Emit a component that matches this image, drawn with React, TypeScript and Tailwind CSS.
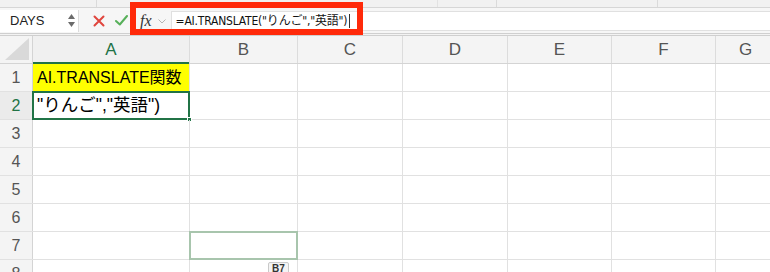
import React from "react";

const cols = [
  { l: "A", w: "w-[157px]" },
  { l: "B", w: "w-[108px]" },
  { l: "C", w: "w-[105px]" },
  { l: "D", w: "w-[105px]" },
  { l: "E", w: "w-[104px]" },
  { l: "F", w: "w-[104px]" },
  { l: "G", w: "w-[60px]" },
];

const rows = [1, 2, 3, 4, 5, 6, 7, 8];

function Cell({ r, c }: { r: number; c: number }) {
  const base = `${cols[c].w} shrink-0 h-full border-r border-[#e1e1e1] relative`;
  if (r === 1 && c === 0) {
    return (
      <div className={`${base} bg-[#ffff00] flex items-center pl-[4px] text-[16px] text-black whitespace-nowrap`}>
        AI.TRANSLATE関数
      </div>
    );
  }
  if (r === 2 && c === 0) {
    return (
      <div className={`${base} flex items-center pl-[4px] text-[17.5px] text-black whitespace-nowrap`}>
        "りんご","英語")
        <div className="absolute -left-[1px] -top-[1px] -right-[1px] -bottom-[1px] border-2 border-[#217346]" />
        <div className="absolute -right-[3px] -bottom-[3px] w-[5px] h-[5px] bg-[#217346] border border-white" />
      </div>
    );
  }
  if (r === 7 && c === 1) {
    return (
      <div className={base}>
        <div className="absolute -left-[1px] -top-[1px] -right-[1px] -bottom-[1px] border-2 border-[#a8c5ad]" />
      </div>
    );
  }
  return <div className={base} />;
}

export default function App() {
  return (
    <div
      className="w-[770px] h-[272px] overflow-hidden bg-white relative"
      style={{ fontFamily: '"Liberation Sans", "Noto Sans CJK JP", sans-serif' }}
    >
      {/* top strip */}
      <div className="h-[8px] bg-[#f1f1f1] border-b border-[#d6d6d6] flex">
        <div className="w-[97px] border-r border-[#dadada]" />
        <div className="w-[341px] border-r border-[#e2e2e2]" />
        <div className="w-[59px] border-r border-[#dadada]" />
        <div className="w-[161px] border-r border-[#dadada]" />
      </div>

      {/* formula row */}
      <div className="h-[25px] bg-[#f6f6f6] flex items-center relative">
        <div className="w-[79px] h-[22px] bg-white border-r border-[#dcdcdc] flex items-center justify-between pl-[10px] pr-[3px]">
          <span className="text-[13px] text-[#222]">DAYS</span>
          <span className="flex flex-col items-center leading-none">
            <svg width="7" height="5" viewBox="0 0 7 5"><path d="M3.5 0 L7 5 L0 5 Z" fill="#6b6b6b" /></svg>
            <svg width="7" height="5" viewBox="0 0 7 5" className="mt-[3px]"><path d="M0 0 L7 0 L3.5 5 Z" fill="#6b6b6b" /></svg>
          </span>
        </div>
        <div className="w-[51px] flex items-center justify-between pl-[14px] pr-[2px]">
          <svg width="12" height="12" viewBox="0 0 12 12">
            <path d="M1.5 1.5 L10.5 10.5 M10.5 1.5 L1.5 10.5" stroke="#e0453d" strokeWidth="2" strokeLinecap="round" />
          </svg>
          <svg width="13" height="11" viewBox="0 0 13 11">
            <path d="M1 6 L4.8 9.5 L12 1" stroke="#57b05a" strokeWidth="2" fill="none" strokeLinecap="round" strokeLinejoin="round" />
          </svg>
        </div>
        <div className="flex items-center pl-[10px] h-full">
          <span
            className="text-[16px] italic text-[#333]"
            style={{ fontFamily: '"Liberation Serif", serif' }}
          >
            fx
          </span>
          <svg width="8" height="5" viewBox="0 0 8 5" className="ml-[6px] mt-[2px]">
            <path d="M0.5 0.5 L4 4 L7.5 0.5" stroke="#b5b5b5" fill="none" />
          </svg>
        </div>
        <div className="ml-[5px] flex-1 h-[20px] bg-white border-y border-l border-[#e0e0e0] flex items-center pl-[4px] whitespace-nowrap">
          <span
            className="text-[12px] text-[#111] tracking-[-0.2px]"
            style={{ fontFamily: '"Liberation Sans Narrow", "DejaVu Sans Condensed", "Noto Sans CJK JP", sans-serif' }}
          >
            =AI.TRANSLATE("りんご","英語")
          </span>
          <span className="w-[1px] h-[14px] bg-[#333] ml-[2px]" />
        </div>
        {/* red annotation frame */}
        <div className="absolute left-[130px] top-[-6px] w-[233px] h-[33px] border-[6px] border-[#ff2a0a]" />
      </div>

      {/* divider */}
      <div className="h-[3px] border-y border-[#cfcfcf] bg-[#f3f3f3]" />

      {/* column header */}
      <div className="h-[28px] flex bg-[#f4f4f4] border-b border-[#d4d4d4]">
        <div className="w-[33px] shrink-0 h-full border-r border-[#d4d4d4] flex items-end justify-end p-[3px]">
          <svg width="24" height="22" viewBox="0 0 24 22"><path d="M24 0 L24 22 L0 22 Z" fill="#d9d9d9" /></svg>
        </div>
        {cols.map((c, i) => (
          <div
            key={c.l}
            className={`${c.w} shrink-0 h-full border-r border-[#dcdcdc] flex items-center justify-center text-[17px] relative ${
              i === 0 ? "text-[#217346] bg-[#f0f0f0]" : "text-[#555]"
            }`}
          >
            {c.l}
            {i === 0 && <div className="absolute left-0 right-0 -bottom-[1px] h-[2px] bg-[#217346]" />}
          </div>
        ))}
      </div>

      {/* rows */}
      {rows.map((r) => (
        <div key={r} className="h-[28px] flex border-b border-[#e1e1e1]">
          <div
            className={`w-[33px] shrink-0 h-full border-r border-[#d4d4d4] flex items-center justify-center text-[16px] ${
              r === 2 ? "bg-[#ebebeb] text-[#217346]" : "bg-[#f4f4f4] text-[#555]"
            }`}
          >
            {r}
          </div>
          {cols.map((c, i) => (
            <Cell key={c.l} r={r} c={i} />
          ))}
        </div>
      ))}

      {/* B7 tooltip */}
      <div className="absolute left-[268px] top-[262px] px-[3px] h-[14px] bg-[#f4f4f4] border border-[#c9c9c9] rounded-[2px] text-[10px] leading-[12px] text-[#333] font-bold">
        B7
      </div>
    </div>
  );
}
